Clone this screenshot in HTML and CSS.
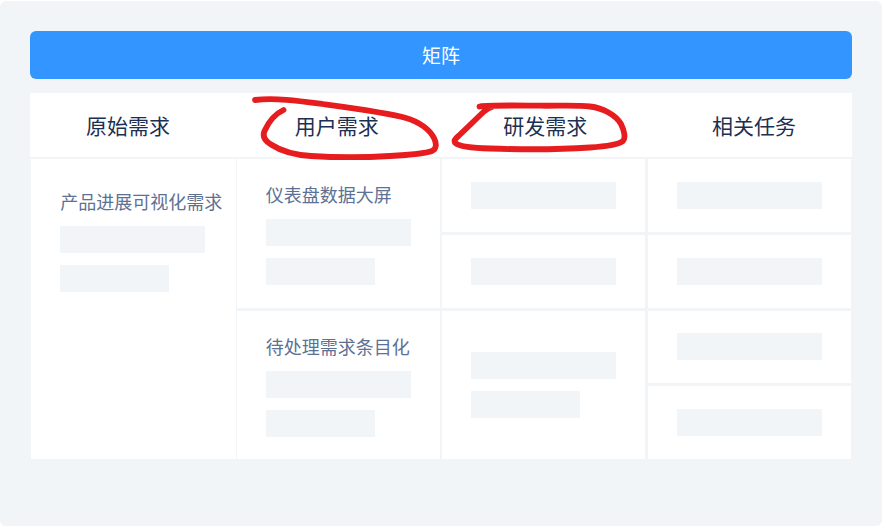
FILE: index.html
```html
<!DOCTYPE html>
<html lang="zh-CN">
<head>
<meta charset="utf-8">
<title>矩阵</title>
<link rel="stylesheet" href="styles.css">
</head>
<body>
<main class="panel">
  <div class="title">矩阵</div>
  <div class="heads">
    <span>原始需求</span>
    <span>用户需求</span>
    <span>研发需求</span>
    <span>相关任务</span>
  </div>
  <div class="matrix">
    <div class="cell top-first span4">
      <p class="label">产品进展可视化需求</p>
      <div class="bar"></div>
      <div class="bar short"></div>
    </div>
    <div class="cell top span2 col2">
      <p class="label">仪表盘数据大屏</p>
      <div class="bar"></div>
      <div class="bar short"></div>
    </div>
    <div class="cell top span2 col2">
      <p class="label">待处理需求条目化</p>
      <div class="bar"></div>
      <div class="bar short"></div>
    </div>
    <div class="cell mid"><div class="bar"></div></div>
    <div class="cell mid"><div class="bar"></div></div>
    <div class="cell mid span2">
      <div class="bar"></div>
      <div class="bar mid-short"></div>
    </div>
    <div class="cell mid col4"><div class="bar"></div></div>
    <div class="cell mid col4"><div class="bar"></div></div>
    <div class="cell mid col4"><div class="bar"></div></div>
    <div class="cell mid col4"><div class="bar"></div></div>
  </div>
</main>
<svg class="marks" width="891" height="532" viewBox="0 0 891 532" aria-hidden="true">
  <path d="M283.5 110 C275 114 268 123 264.5 131 C262 137 265 141 271 144.5 C281 151 295 155 311 156 C335 157.5 365 157.5 390 156 C408 155 424 154 432 151 C437 149 436.5 143 434 138 C430 130 420 122 406 118 C390 113 360 109 323 104 C300 101 275 97.5 255 100"/>
  <path d="M479.5 106.5 C490 105 515 105.5 540 105.7 C560 105.9 578 105 590 106.5 C603 108 616 115 621 124 C624 130 626 138 623 141 C618 145 605 146.5 590 147.5 C560 149.5 520 149.5 490 148.5 C475 148 460 147 456 143.5 C453 141 455 139 459 135.5 C467 128 476 119 484 111.5 C487 109 490 107.5 493 106.5"/>
</svg>
</body>
</html>
```

FILE: styles.css
```css
* { box-sizing: border-box; }

html, body {
  margin: 0;
  height: 100%;
  background: #fff;
}

body {
  position: relative;
  overflow: hidden;
  padding-top: 1px;
  font-family: "Noto Sans CJK SC", "Noto Sans", sans-serif;
}

.panel {
  width: 882px;
  height: 525px;
  padding: 30px 30px 0;
  background: #f1f5f8;
  border-radius: 6px;
}

.title {
  height: 48px;
  line-height: 48px;
  text-align: center;
  font-size: 19px;
  color: #fff;
  background: #3395ff;
  border-radius: 6px;
}

.heads {
  display: flex;
  justify-content: space-between;
  align-items: center;
  height: 64px;
  margin-top: 14px;
  padding: 0 56px;
  font-size: 21px;
  line-height: 28px;
  color: #1b3052;
  background: #fff;
}

.matrix {
  display: grid;
  grid-auto-flow: column;
  grid-template-columns: 203.4px 203.3px 203px 204px;
  grid-template-rows: repeat(4, 1fr);
  column-gap: 2px;
  row-gap: 3px;
  height: 300px;
  margin: 2px 0 0 1.3px;
}

.cell {
  display: flex;
  flex-direction: column;
  padding-left: 29px;
  background: #fff;
}

.span4 { grid-row: span 4; margin-right: -1px; }
.span2 { grid-row: span 2; }
.col4 { margin-left: 1px; }

.top-first {
  gap: 13px;
  padding-top: 30px;
}

.top {
  gap: 13px;
  padding-top: 23px;
}

.mid {
  gap: 12px;
  justify-content: center;
}

.label {
  margin: 0;
  font-size: 18px;
  line-height: 24px;
  white-space: nowrap;
  color: #5d7194;
}

.top .bar + .bar,
.top-first .bar + .bar { margin-top: -1px; }

.bar {
  width: 145px;
  height: 27px;
  background: #f1f5f8;
}

.bar.short { width: 109px; }
.bar.mid-short { width: 109px; }

.marks {
  position: absolute;
  left: 0;
  top: 0;
  fill: none;
  stroke: #e71c1e;
  stroke-width: 5.8;
  stroke-linecap: round;
  stroke-linejoin: round;
}
```
